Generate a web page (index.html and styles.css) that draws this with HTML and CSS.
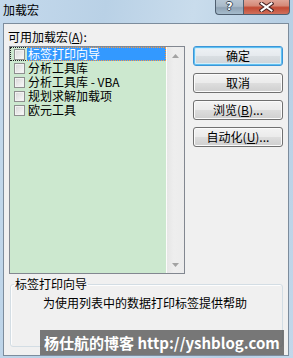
FILE: index.html
```html
<!DOCTYPE html>
<html>
<head>
<meta charset="utf-8">
<link rel="stylesheet" href="styles.css">
</head>
<body>
<div class="window">
  <div class="titlebar">
    <span class="title">加载宏</span>
    <div class="caption">
      <div class="cap help">?</div>
      <div class="cap close">
        <svg width="15" height="10" viewBox="0 0 15 10">
          <path d="M2.5 1.5 L12.5 8.5 M12.5 1.5 L2.5 8.5" stroke="#4a2626" stroke-width="4" stroke-linecap="square" fill="none"/>
          <path d="M2.5 1.5 L12.5 8.5 M12.5 1.5 L2.5 8.5" stroke="#ffffff" stroke-width="2" stroke-linecap="square" fill="none"/>
        </svg>
      </div>
    </div>
  </div>
  <div class="client">
    <div class="label">可用加载宏(<u>A</u>):</div>
    <div class="main">
      <div class="listbox">
        <ul class="items">
          <li class="item focus"><span class="cb"></span><span class="txt sel">标签打印向导</span></li>
          <li class="item"><span class="cb"></span><span class="txt">分析工具库</span></li>
          <li class="item"><span class="cb"></span><span class="txt">分析工具库 - VBA</span></li>
          <li class="item"><span class="cb"></span><span class="txt">规划求解加载项</span></li>
          <li class="item"><span class="cb"></span><span class="txt">欧元工具</span></li>
        </ul>
        <div class="scrollbar">
          <div class="sbtn"><svg width="7" height="4" viewBox="0 0 7 4"><path d="M3.5 0 L7 4 L0 4 Z" fill="#a3a3a3"/></svg></div>
          <div class="sbtn"><svg width="7" height="4" viewBox="0 0 7 4"><path d="M0 0 L7 0 L3.5 4 Z" fill="#a3a3a3"/></svg></div>
        </div>
      </div>
      <div class="buttons">
        <div class="btn default">确定</div>
        <div class="btn">取消</div>
        <div class="btn">浏览(<u>B</u>)...</div>
        <div class="btn">自动化(<u>U</u>)...</div>
      </div>
    </div>
    <fieldset class="group">
      <legend>标签打印向导</legend>
      <p class="desc">为使用列表中的数据打印标签提供帮助</p>
    </fieldset>
    <div class="watermark">杨仕航的博客 http://yshblog.com</div>
  </div>
</div>
</body>
</html>
```
FILE: styles.css
```css
* { box-sizing: border-box; }
body {
  margin: 0;
  width: 293px;
  height: 358px;
  overflow: hidden;
  font-family: "Noto Sans CJK SC", "Noto Sans", sans-serif;
  font-size: 12px;
  color: #000;
  background: #bdd4e8;
}
.window {
  width: 293px;
  height: 358px;
  display: flex;
  flex-direction: column;
  background: linear-gradient(100deg, #c4d9ec 0%, #b9d1e6 30%, #c9dcec 55%, #b7cfe4 80%, #c2d7ea 100%);
}
.titlebar {
  height: 23px;
  display: flex;
  align-items: flex-start;
  padding: 0 3px 0 3px;
}
.title {
  padding-top: 3px;
  line-height: 14px;
  font-size: 12px;
}
.caption {
  margin-left: auto;
  display: flex;
}
.cap {
  height: 15px;
  border: 1px solid #4f5f70;
  border-top: none;
  display: flex;
  align-items: center;
  justify-content: center;
}
.help {
  width: 28px;
  border-right: none;
  border-radius: 0 0 0 4px;
  background: linear-gradient(#b6c6d4 0%, #a9bac9 45%, #8fa2b4 55%, #a6bccd 100%);
  color: #fff;
  font-family: "DejaVu Sans", sans-serif;
  font-weight: bold;
  font-size: 11px;
  line-height: 12px;
  text-shadow: 1px 0 0 #3d4c5a, -1px 0 0 #3d4c5a, 0 1px 0 #3d4c5a, 0 -1px 0 #3d4c5a;
}
.close {
  width: 47px;
  border-radius: 0 0 4px 0;
  background: linear-gradient(#dfa597 0%, #d58a78 40%, #c24a33 55%, #d0705c 100%);
}
.close svg { display: block; margin-top: -1px; }
.client {
  margin: 0 4px 0 3px;
  height: 333px;
  border: 1px solid #7c8c9c;
  background: #f0f0f0;
  display: flex;
  flex-direction: column;
  position: relative;
}
.label {
  padding: 6px 0 0 4px;
  line-height: 14px;
  height: 20px;
}
.main {
  display: flex;
  align-items: flex-start;
  margin: 2px 0 0 5px;
  gap: 8px;
}
.listbox {
  width: 176px;
  height: 228px;
  border: 1px solid #828790;
  display: flex;
  background: #cce8cf;
}
.items {
  list-style: none;
  margin: 0;
  padding: 0;
  width: 156px;
}
.item {
  height: 14px;
  display: flex;
  align-items: flex-start;
  border: 1px dotted transparent;
  padding-left: 3px;
}
.item.focus {
  border-color: #222;
  border-right: none;
}
.cb {
  width: 11px;
  height: 11px;
  margin: 1px 2px 0 0;
  border: 1px solid #8e8f8f;
  background: linear-gradient(135deg, #d6d6d6, #fbfbfb);
  box-shadow: inset 0 0 0 1px #f2f2f2;
  flex: none;
}
.txt {
  flex: 1;
  height: 12px;
  line-height: 12px;
  padding-left: 1px;
  white-space: nowrap;
}
.txt.sel {
  background: #3399ff;
  color: #fff;
  margin: -1px 0 -1px 0;
  height: 14px;
  border: 1px dotted #ff9a3c;
  border-left: none;
  line-height: 12px;
}
.scrollbar {
  width: 18px;
  border-left: 1px solid #fbfbfb;
  background: linear-gradient(90deg, #e6e6e6, #eeeeee 40%, #ececec);
  display: flex;
  flex-direction: column;
  justify-content: space-between;
}
.sbtn {
  height: 17px;
  display: flex;
  align-items: center;
  justify-content: center;
}
.sbtn svg { display: block; }
.buttons {
  display: flex;
  flex-direction: column;
  gap: 7px;
}
.btn {
  width: 90px;
  height: 20px;
  border: 1px solid #707070;
  border-radius: 3px;
  background: linear-gradient(#f3f3f3 0%, #ebebeb 48%, #dddddd 52%, #cfcfcf 100%);
  box-shadow: inset 0 0 0 1px #fbfbfb;
  text-align: center;
  line-height: 18px;
  font-size: 12px;
}
.btn.default {
  border-color: #3c95d8;
  box-shadow: inset 0 0 0 1px #5fc0f0, inset 0 0 0 2px #d6eefa;
  background: linear-gradient(#eef2f5 0%, #e6eaee 48%, #d9dee2 52%, #cdd3d8 100%);
}
.group {
  flex: 1;
  margin: 3px 5px 8px 6px;
  border: 1px solid #d3dde4;
  border-radius: 3px;
  padding: 0 3px;
  min-width: 0;
  box-shadow: inset 1px 1px 0 #fdfdfd;
}
.group legend {
  padding: 0 1px;
  line-height: 14px;
  font-size: 12px;
}
.desc {
  margin: 5px 0 0 29px;
  line-height: 14px;
}
.watermark {
  position: absolute;
  left: 36px;
  top: 306px;
  width: 244px;
  height: 25px;
  padding-left: 4px;
  background: rgba(72, 72, 72, 0.72);
  color: #fff;
  font-weight: bold;
  font-size: 15px;
  line-height: 25px;
  white-space: nowrap;
}
```
